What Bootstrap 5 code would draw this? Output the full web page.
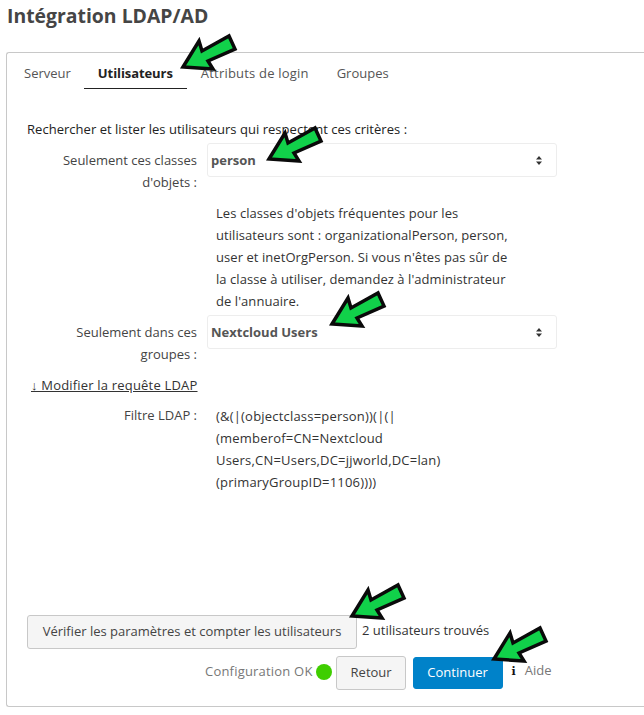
<!DOCTYPE html>
<html lang="fr">
<head>
  <meta charset="UTF-8" />
  <meta name="viewport" content="width=device-width, initial-scale=1.0"/>
  <title>Intégration LDAP/AD</title>
  <link href="https://cdn.jsdelivr.net/npm/bootstrap@5.3.6/dist/css/bootstrap.min.css" rel="stylesheet"/>
  <style>
    body {
      font-family: "Open Sans", "Liberation Sans", sans-serif;
      font-size: 13px;
      color: #222;
      overflow: hidden;
      height: 715px;
    }
    .page-title {
      font-size: 19.4px;
      font-weight: 700;
      color: #454545;
      line-height: 24px;
      margin: 0;
      padding: 4px 0 0 7px;
      height: 52px;
    }
    .ldap-box {
      margin-left: 6px;
      height: 655px;
      border: 1px solid #c8c8c8;
      border-right: 0;
      border-radius: 3px 0 0 3px;
      padding: 0 0 0 20px;
    }
    .ldap-tabs { height: 36px; }
    .ldap-tabs .nav-link {
      color: #555;
      padding: 10px 14px 0;
      height: 36px;
      line-height: 20px;
    }
    .ldap-tabs .first-tab { padding-left: 0; padding-right: 13px; margin-left: -3px; }
    .ldap-tabs .wide-tab { letter-spacing: .2px; }
    .ldap-tabs .nav-link.active {
      color: #222;
      font-weight: 700;
      letter-spacing: -.08px;
      border-bottom: 1px solid #222;
    }
    .intro { margin: 29px 0 3px 0; line-height: 22px; height: 22px; letter-spacing: .03px; }
    .field-row { display: flex; }
    .field-label {
      width: 170px;
      text-align: right;
      line-height: 22px;
      color: #444;
      flex: none;
    }
    .select-label { padding-top: 6px; }
    .field-select {
      margin-left: 10px;
      width: 350px;
      height: 34px;
      padding: 1px 24px 0 3px;
      font-size: 13px;
      font-weight: 700;
      color: #555;
      border: 1px solid #ededed;
      border-radius: 3px;
      background-position: right 14px center;
      background-size: 6px 9px;
      background-image: url("data:image/svg+xml,%3csvg xmlns='http://www.w3.org/2000/svg' viewBox='0 0 6 9'%3e%3cpath fill='%23333' d='M3 0l3 3.6H0zM3 9L0 5.4h6z'/%3e%3c/svg%3e");
    }
    .help-text {
      margin: 9px 0 3px 189px;
      width: 300px;
      line-height: 22px;
      color: #333;
      letter-spacing: .06px;
    }
    .query-link {
      display: block;
      color: #333;
      margin: 9px 0 0 4px;
      line-height: 22px;
      letter-spacing: .19px;
    }
    .filter-value {
      margin-left: 19px;
      padding-top: 1px;
      width: 245px;
      line-height: 22px;
      color: #333;
      letter-spacing: .2px;
    }
    .check-btn, .back-btn {
      height: 34px;
      padding: 0 14px;
      font-size: 13px;
      color: #444;
      background: #f5f5f5;
      border: 1px solid #c8c8c8;
      border-radius: 3px;
    }
    .check-btn { width: 330px; }
    .back-btn { width: 70px; }
    .next-btn {
      width: 90px;
      height: 32px;
      padding: 0;
      margin-left: 7px;
      font-size: 13px;
      color: #fff;
      background: #0082c9;
      border: 1px solid #0082c9;
      border-radius: 3px;
    }
    .check-row { margin-top: 122px; height: 34px; }
    .found-text { margin-left: 5px; line-height: 30px; height: 34px; color: #333; }
    .foot-row { margin-top: 7px; height: 34px; }
    .conf-text { color: #777; margin: 0 0 4px 178px; line-height: 30px; letter-spacing: .2px; }
    .conf-dot {
      width: 16px;
      height: 16px;
      border-radius: 50%;
      background: #3fce00;
      margin: 0 4px 2px 3px;
    }
    .help-link { color: #777; margin: 0 0 4px 9px; line-height: 30px; }
    .help-link b { color: #111; font-family: "DejaVu Serif", serif; font-size: 11px; margin-right: 9px; }
    .arrow-mark {
      position: absolute;
      width: 56px;
      height: 42px;
      overflow: visible;
    }
    .arrow-1 { left: 183px; top: 33px; }
    .arrow-2 { left: 269px; top: 125px; }
    .arrow-3 { left: 332px; top: 290px; }
    .arrow-4 { left: 352px; top: 582px; }
    .arrow-5 { left: 494px; top: 625px; }
  </style>
</head>
<body class="position-relative">
  <h2 class="page-title">Intégration LDAP/AD</h2>

  <div class="ldap-box">
    <ul class="nav ldap-tabs">
      <li class="nav-item"><a class="nav-link first-tab" href="#">Serveur</a></li>
      <li class="nav-item"><a class="nav-link active" href="#">Utilisateurs</a></li>
      <li class="nav-item"><a class="nav-link wide-tab" href="#">Attributs de login</a></li>
      <li class="nav-item"><a class="nav-link" href="#">Groupes</a></li>
    </ul>

    <p class="intro">Rechercher et lister les utilisateurs qui respectent ces critères :</p>

    <div class="field-row">
      <div class="field-label select-label">Seulement ces classes d'objets :</div>
      <select class="form-select field-select"><option>person</option></select>
    </div>
    <div class="help-text">Les classes d'objets fréquentes pour les utilisateurs sont : organizationalPerson, person, user et inetOrgPerson. Si vous n'êtes pas sûr de la classe à utiliser, demandez à l'administrateur de l'annuaire.</div>

    <div class="field-row">
      <div class="field-label select-label">Seulement dans ces groupes :</div>
      <select class="form-select field-select"><option>Nextcloud Users</option></select>
    </div>

    <a class="query-link" href="#">↓ Modifier la requête LDAP</a>

    <div class="field-row mt-2">
      <div class="field-label">Filtre LDAP :</div>
      <div class="filter-value">(&amp;(|(objectclass=person))(|(|(memberof=CN=Nextcloud Users,CN=Users,DC=jjworld,DC=lan)(primaryGroupID=1106))))</div>
    </div>

    <div class="d-flex check-row">
      <button class="btn check-btn" type="button">Vérifier les paramètres et compter les utilisateurs</button>
      <span class="found-text">2 utilisateurs trouvés</span>
    </div>

    <div class="d-flex align-items-center foot-row">
      <span class="conf-text">Configuration OK</span>
      <span class="conf-dot"></span>
      <button class="btn back-btn" type="button">Retour</button>
      <button class="btn next-btn" type="button">Continuer</button>
      <span class="help-link"><b>i</b>Aide</span>
    </div>
  </div>

  <svg class="arrow-mark arrow-1" viewBox="0 -34 56 42"><use href="#arrow-shape"/></svg>
  <svg class="arrow-mark arrow-2" viewBox="0 -34 56 42"><use href="#arrow-shape"/></svg>
  <svg class="arrow-mark arrow-3" viewBox="0 -34 56 42"><use href="#arrow-shape"/></svg>
  <svg class="arrow-mark arrow-4" viewBox="0 -34 56 42"><use href="#arrow-shape"/></svg>
  <svg class="arrow-mark arrow-5" viewBox="0 -34 56 42"><use href="#arrow-shape"/></svg>
  <svg width="0" height="0" class="position-absolute">
    <defs>
      <polygon id="arrow-shape" points="0,0 16,-26 19,-16 46,-31 52,-18 25,-6 30,2" fill="#11d14a" stroke="#0a0a0a" stroke-width="3.5" stroke-linejoin="miter"/>
    </defs>
  </svg>

  <script src="https://cdn.jsdelivr.net/npm/bootstrap@5.3.6/dist/js/bootstrap.bundle.min.js"></script>
</body>
</html>
